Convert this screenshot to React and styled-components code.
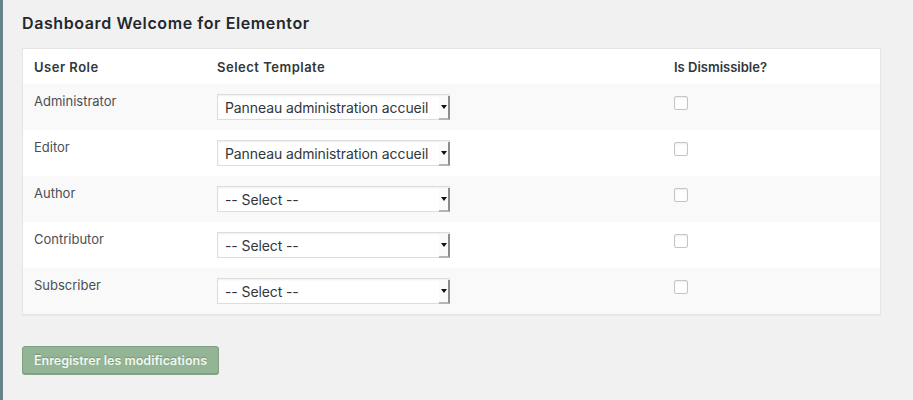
import React from "react";
import styled, { createGlobalStyle } from "styled-components";

const GlobalStyle = createGlobalStyle`
  html, body {
    margin: 0;
    padding: 0;
    background: #f1f1f1;
  }
  body {
    font-family: Inter, "Liberation Sans", Arial, sans-serif;
    color: #32373c;
  }
`;

const Page = styled.div`
  min-height: 400px;
  box-sizing: border-box;
  border-left: 3px solid #67838b;
  padding: 12px 32px 0 19px;
`;

const Title = styled.h1`
  margin: 0 0 14px;
  font-size: 16px;
  line-height: 22px;
  font-weight: 600;
  letter-spacing: 0.6px;
  color: #23282d;
`;

const Table = styled.div`
  background: #fff;
  border: 1px solid #e5e5e5;
  box-shadow: 0 1px 1px rgba(0, 0, 0, 0.04);
`;

const Row = styled.div`
  display: grid;
  grid-template-columns: 183px 457px 1fr;
  align-items: start;
  height: ${(p) => (p.$head ? 35 : 46)}px;
  background: ${(p) => (p.$striped ? "#f9f9f9" : "#fff")};
`;

const HeadCell = styled.div`
  padding: 9px 11px 0;
  font-size: 13px;
  line-height: 19px;
  font-weight: 600;
  letter-spacing: ${(p) => (p.$wide ? "0.5px" : "0")};
  color: #32373c;
`;

const RoleCell = styled.div`
  padding: 8px 11px 0;
  font-size: 13px;
  line-height: 19px;
  color: #4a4f54;
`;

const SelectCell = styled.div`
  padding: 10px 0 0 11px;
`;

const CheckCell = styled.div`
  padding: 12px 0 0 11px;
`;

const SelectBox = styled.div`
  position: relative;
  width: 233px;
  height: 26px;
  box-sizing: border-box;
  border: 1px solid #ddd;
  box-shadow: inset 0 1px 2px rgba(0, 0, 0, 0.07);
  background: #fff;
`;

const NativeSelect = styled.select`
  appearance: none;
  -webkit-appearance: none;
  width: 100%;
  height: 100%;
  border: 0;
  margin: 0;
  padding: 0 10px 0 7px;
  background: transparent;
  font-family: Inter, "Liberation Sans", Arial, sans-serif;
  font-size: 14px;
  letter-spacing: -0.1px;
  color: #32373c;
  outline: none;
`;

/* little button at the right end of the select, drawn over the field */
const Arrow = styled.span`
  position: absolute;
  top: 1px;
  right: -1px;
  bottom: -1px;
  width: 11px;
  box-sizing: border-box;
  border-right: 2px solid #8c8c8c;
  border-bottom: 2px solid #b5b5b5;
  background: #fafafa;
  pointer-events: none;
  &::after {
    content: "";
    position: absolute;
    left: 2px;
    top: 9px;
    border-left: 3px solid transparent;
    border-right: 3px solid transparent;
    border-top: 4px solid #111;
  }
`;

const Checkbox = styled.input.attrs({ type: "checkbox" })`
  appearance: none;
  -webkit-appearance: none;
  margin: 0;
  width: 14px;
  height: 14px;
  box-sizing: border-box;
  border: 1px solid #c3c6c9;
  border-radius: 2px;
  background: #fff;
  box-shadow: inset 0 1px 2px rgba(0, 0, 0, 0.08);
  display: block;
`;

const Footer = styled.div`
  padding-top: 31px;
`;

const SaveButton = styled.button`
  width: 197px;
  height: 28px;
  box-sizing: border-box;
  border: 1px solid #7f9f80;
  border-radius: 3px;
  background: #94b595;
  color: #f3f8f3;
  font-family: Inter, "Liberation Sans", Arial, sans-serif;
  font-size: 12.5px;
  font-weight: 600;
  padding: 0;
  box-shadow: 0 1px 0 #86a487;
  text-shadow: 0 -1px 1px rgba(70, 100, 70, 0.4);
`;

const roles = [
  { name: "Administrator", template: "Panneau administration accueil" },
  { name: "Editor", template: "Panneau administration accueil" },
  { name: "Author", template: "-- Select --" },
  { name: "Contributor", template: "-- Select --" },
  { name: "Subscriber", template: "-- Select --" },
];

export default function App() {
  return (
    <>
      <GlobalStyle />
      <Page>
        <Title>Dashboard Welcome for Elementor</Title>
        <Table>
          <Row $head>
            <HeadCell $wide>User Role</HeadCell>
            <HeadCell $wide>Select Template</HeadCell>
            <HeadCell>Is Dismissible?</HeadCell>
          </Row>
          {roles.map((r, i) => (
            <Row key={r.name} $striped={i % 2 === 0}>
              <RoleCell>{r.name}</RoleCell>
              <SelectCell>
                <SelectBox>
                  <NativeSelect defaultValue={r.template}>
                    <option>-- Select --</option>
                    <option>Panneau administration accueil</option>
                  </NativeSelect>
                  <Arrow />
                </SelectBox>
              </SelectCell>
              <CheckCell>
                <Checkbox />
              </CheckCell>
            </Row>
          ))}
        </Table>
        <Footer>
          <SaveButton>Enregistrer les modifications</SaveButton>
        </Footer>
      </Page>
    </>
  );
}
